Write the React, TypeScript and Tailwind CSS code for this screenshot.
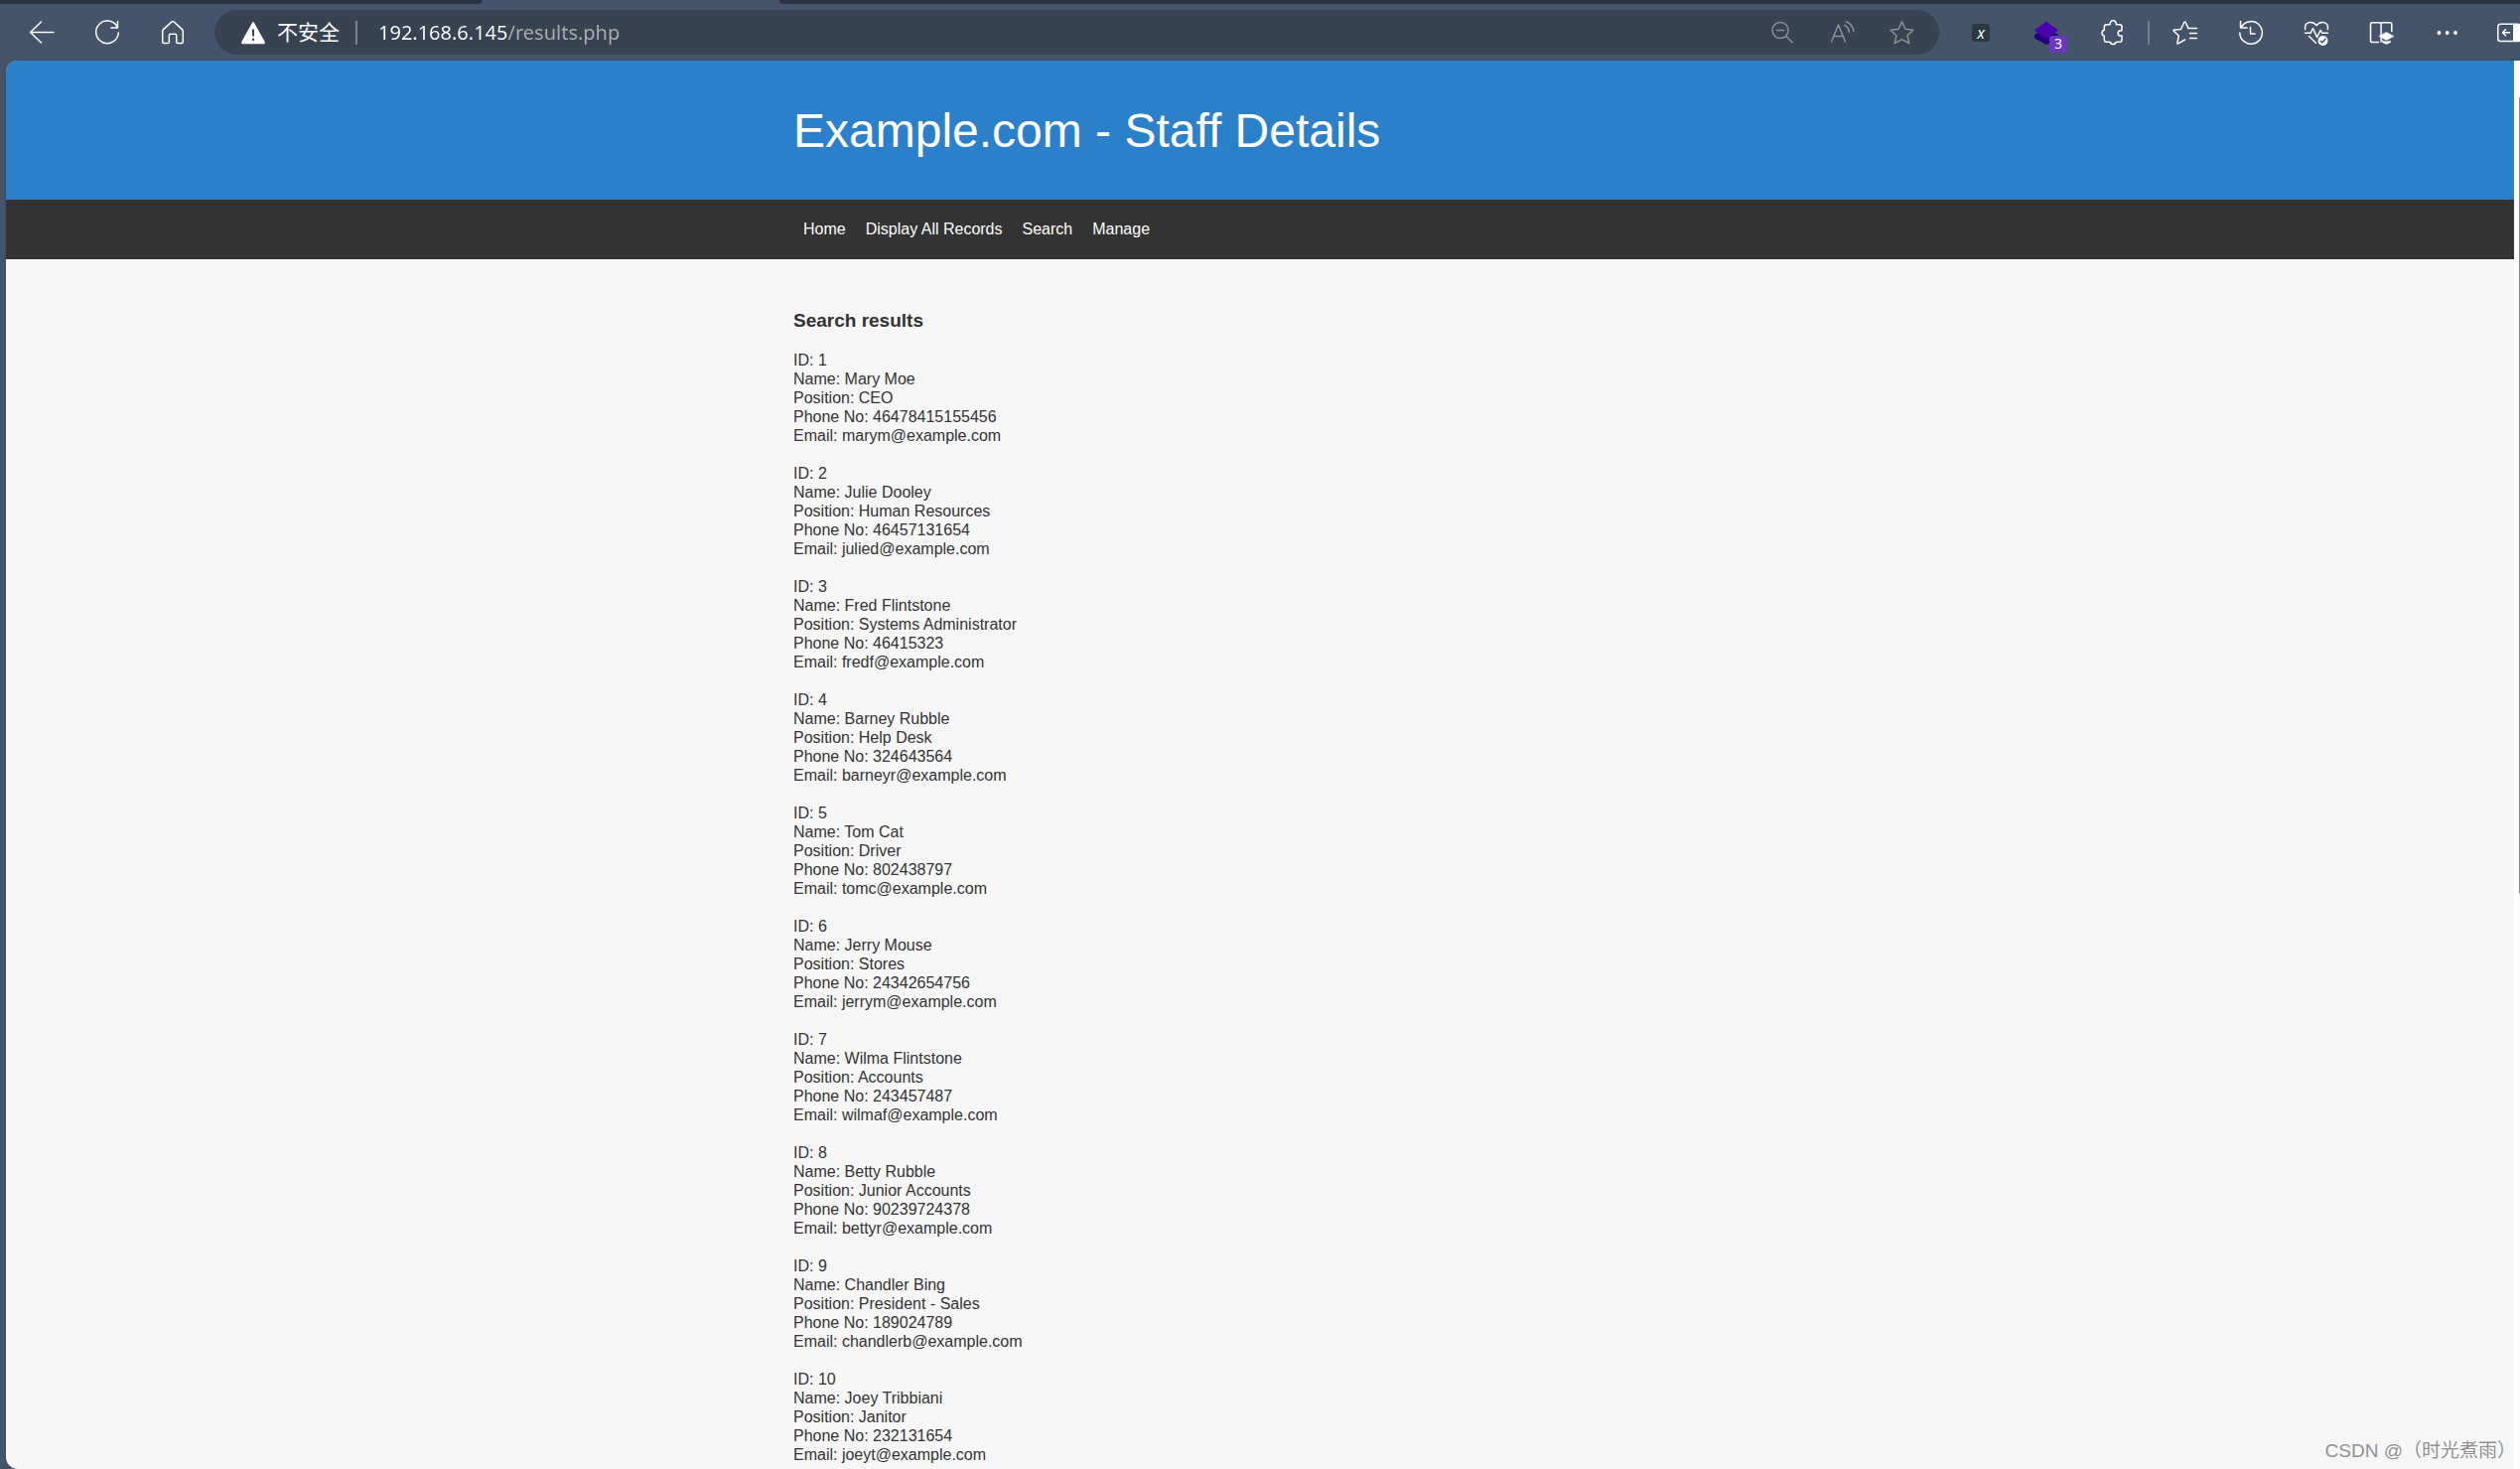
import React from 'react';

type Staff = {
  id: number;
  name: string;
  position: string;
  phone: string;
  email: string;
};

const staff: Staff[] = [
  { id: 1, name: 'Mary Moe', position: 'CEO', phone: '46478415155456', email: 'marym@example.com' },
  { id: 2, name: 'Julie Dooley', position: 'Human Resources', phone: '46457131654', email: 'julied@example.com' },
  { id: 3, name: 'Fred Flintstone', position: 'Systems Administrator', phone: '46415323', email: 'fredf@example.com' },
  { id: 4, name: 'Barney Rubble', position: 'Help Desk', phone: '324643564', email: 'barneyr@example.com' },
  { id: 5, name: 'Tom Cat', position: 'Driver', phone: '802438797', email: 'tomc@example.com' },
  { id: 6, name: 'Jerry Mouse', position: 'Stores', phone: '24342654756', email: 'jerrym@example.com' },
  { id: 7, name: 'Wilma Flintstone', position: 'Accounts', phone: '243457487', email: 'wilmaf@example.com' },
  { id: 8, name: 'Betty Rubble', position: 'Junior Accounts', phone: '90239724378', email: 'bettyr@example.com' },
  { id: 9, name: 'Chandler Bing', position: 'President - Sales', phone: '189024789', email: 'chandlerb@example.com' },
  { id: 10, name: 'Joey Tribbiani', position: 'Janitor', phone: '232131654', email: 'joeyt@example.com' },
];

const navLinks = ['Home', 'Display All Records', 'Search', 'Manage'];

function Icon({ children }: { children: React.ReactNode }) {
  return (
    <svg
      className="h-7 w-7 shrink-0"
      viewBox="0 0 28 28"
      fill="none"
      stroke="currentColor"
      strokeWidth="1.5"
      strokeLinecap="round"
      strokeLinejoin="round"
      aria-hidden="true"
    >
      {children}
    </svg>
  );
}

function ToolButton({ label, children }: { label: string; children: React.ReactNode }) {
  return (
    <button type="button" aria-label={label} className="flex h-11 w-[66px] shrink-0 items-center justify-center">
      {children}
    </button>
  );
}

function FieldButton({ label, children }: { label: string; children: React.ReactNode }) {
  return (
    <button type="button" aria-label={label} className="flex h-11 w-[60px] shrink-0 items-center justify-center text-[#8f9091]">
      {children}
    </button>
  );
}

function AddressBar() {
  return (
    <div className="mx-[9px] flex h-[45px] min-w-0 flex-1 items-center rounded-full bg-[#374353] pr-2 pl-[25px]">
      <button type="button" className="flex items-center gap-[10px] text-[21px] leading-7 text-white">
        <Icon>
          <path d="M14 3.7 25 23.4q.4 1.1-.8 1.1H3.8q-1.2 0-.8-1.1Z" fill="currentColor" />
          <path d="M14 10.5v7" stroke="#374353" strokeWidth="2" strokeLinecap="butt" />
          <circle cx="14" cy="20.7" r="1.2" fill="#374353" stroke="none" />
        </Icon>
        不安全
      </button>
      <div className="mr-[21px] ml-4 h-6 w-[2px] shrink-0 bg-[#7b838d]" />
      <input
        aria-label="Address"
        defaultValue="192.168.6.145/results.php"
        className="h-8 min-w-0 flex-1 bg-[linear-gradient(to_right,#ffffff_131px,#adadad_131px)] bg-clip-text font-['Noto_Sans',sans-serif] text-xl text-transparent outline-none"
      />
      <FieldButton label="Zoom out">
        <Icon>
          <circle cx="12" cy="11.5" r="8" />
          <path d="M8.3 11.5h7.4M17.8 17.3l6.4 6.4" />
        </Icon>
      </FieldButton>
      <FieldButton label="Read aloud">
        <Icon>
          <path d="M3.500 23 10.500 6l7 17M6 17.500h9M16.500 6.300q4.500 2 4.800 7M18.500 2.800q7 3.200 7.300 10" />
        </Icon>
      </FieldButton>
      <FieldButton label="Add to favorites">
        <Icon>
          <path d="m14.500 2.900 3.400 7.400 8.100.9-6 5.500 1.800 8-7.300-4.100-7.300 4.100 1.800-8-6-5.500 8.100-.9Z" />
        </Icon>
      </FieldButton>
    </div>
  );
}

function Toolbar() {
  return (
    <div className="flex h-[57px] shrink-0 items-center overflow-hidden pl-[9px] text-white">
      <ToolButton label="Back">
        <Icon>
          <path d="M26 13.5H2.5M13.5 3 2.5 13.5l11 10.5" />
        </Icon>
      </ToolButton>
      <ToolButton label="Refresh">
        <Icon>
          <path d="M24 8A11.3 11.3 0 1 0 25.3 14M24.5 2.5V9h-6.7" />
        </Icon>
      </ToolButton>
      <ToolButton label="Home">
        <Icon>
          <path d="M3.7 12.3q0-1 .8-1.7L13 2.9q1-.8 2 0l8.5 7.700q.8.7.8 1.700V23q0 1.500-1.500 1.500H19q-1.300 0-1.300-1.300v-6.400q0-1.600-1.600-1.600h-4.200q-1.600 0-1.600 1.600v6.400q0 1.300-1.300 1.300H5.200Q3.700 24.500 3.700 23Z" />
        </Icon>
      </ToolButton>

      <AddressBar />

      <ToolButton label="XPath extension">
        <span className="flex h-[18px] w-[18px] items-center justify-center rounded-[3px] bg-[#2b3a40] font-['Open_Sans',sans-serif] text-base leading-4 italic">
          x
        </span>
      </ToolButton>
      <ToolButton label="Layers extension">
        <span className="relative flex">
          <svg className="h-7 w-7" viewBox="0 0 28 28" aria-hidden="true">
            <path d="M2 16v3.500L14 26l12-6.500V16L14 9Z" fill="#22007c" />
            <path d="m14 2.500 12 9-12 8.800-12-8.800Z" fill="#4b00b0" />
          </svg>
          <span className="absolute top-[17px] left-[17px] h-[17px] w-[18px] rounded-[3px] bg-[#6b37bf] text-center font-['Noto_Sans',sans-serif] text-sm leading-4">
            3
          </span>
        </span>
      </ToolButton>
      <ToolButton label="Extensions">
        <Icon>
          <path d="M8.500 5.700h3.700a3.100 3.100 0 1 1 6 0h3.500q2.300 0 2.300 2.300v3.700h-1.200a2.700 2.700 0 0 0 0 5.400H24V21q0 2.300-2.300 2.300h-3.500a3.100 3.100 0 0 1-6 0H8.500q-2.200 0-2.200-2.300v-3.700a3.100 3.100 0 0 1 0-6V8q0-2.300 2.200-2.300Z" />
        </Icon>
      </ToolButton>
      <div className="mx-[3px] h-6 w-[2px] shrink-0 bg-[#76808e]" />
      <ToolButton label="Favorites">
        <Icon>
          <path d="M17.500 9.500h8M18.500 14.500h7M18.500 19.500h7M13.500 21l-6.800 3.900q-1 .3-.8-.8L7.300 17l-5-4.700q-.7-1 .6-1.300l6.600-.5 3.200-7q.8-1 1.500 0l2.800 6.100" />
        </Icon>
      </ToolButton>
      <ToolButton label="History">
        <Icon>
          <path d="M3.500 2.500v6.500H10M4.300 8.300A11.300 11.300 0 1 1 2.800 14M13.500 8.500v6.500h4.500" />
        </Icon>
      </ToolButton>
      <ToolButton label="Browser essentials">
        <Icon>
          <path d="M2.600 10.500C1.500 2.500 10 1.500 14 6.500c4-5 12.500-4 11.400 4M2.500 14.200h5.700l2.300-4.700 4 9 3.500-7 1.800 2.700h5.700M6.500 17.500l7 6.700" />
          <circle cx="20.500" cy="22" r="5" fill="currentColor" stroke="none" />
          <path d="m18.200 22.200 1.600 1.600 3.200-3.600" stroke="#44546a" />
        </Icon>
      </ToolButton>
      <ToolButton label="Immersive reader">
        <Icon>
          <path d="M10.500 23.500H4.300q-1.800 0-1.800-1.800V5.500q0-1.800 1.800-1.800h7q1.200 0 1.800 1 .6-1 1.800-1H22q1.800 0 1.800 1.800v7M13.100 4.500V23" />
          <path d="m18.500 13.500 7.500 4-7.500 4-7.500-4ZM14.500 22v1.500q4 3.500 8 0V22q-4 1.800-8 0Z" fill="currentColor" strokeWidth="0.500" />
        </Icon>
      </ToolButton>
      <ToolButton label="Settings and more">
        <Icon>
          <g fill="currentColor" stroke="none">
            <circle cx="5.500" cy="14" r="1.900" />
            <circle cx="13.700" cy="14" r="1.900" />
            <circle cx="22" cy="14" r="1.900" />
          </g>
        </Icon>
      </ToolButton>
      <button type="button" aria-label="Sidebar" className="flex h-11 w-10 shrink-0 items-center overflow-hidden pl-[15px]">
        <Icon>
          <rect x="2.800" y="5.200" width="22.500" height="17.300" rx="2.500" />
          <path d="M18 5.200h9v17.300h-9z" fill="currentColor" stroke="none" />
          <path d="M14.500 13.800H7.500M10.500 10.800l-3 3 3 3" />
        </Icon>
      </button>
    </div>
  );
}

function StaffRecord({ person }: { person: Staff }) {
  return (
    <p className="mb-[19px] leading-[19px]">
      ID: {person.id}
      <br />
      Name: {person.name}
      <br />
      Position: {person.position}
      <br />
      Phone No: {person.phone}
      <br />
      Email: {person.email}
    </p>
  );
}

export default function App() {
  return (
    <div className="relative flex h-screen flex-col overflow-hidden bg-[#44546a] font-['Liberation_Sans','Noto_Sans_CJK_SC',sans-serif]">
      {/* tab strip, only its lower edge is visible */}
      <div className="flex h-1 shrink-0">
        <div className="w-[486px] rounded-br bg-[#2a3441]" />
        <div className="w-[299px]" />
        <div className="flex-1 rounded-bl bg-[#2a3441]" />
      </div>

      <Toolbar />

      <div className="ml-[6px] flex min-h-0 flex-1 overflow-hidden rounded-l-xl shadow-[0_0_2px_rgba(0,0,0,0.3)]">
        <div className="min-w-0 flex-1 overflow-hidden bg-[#f6f6f6] text-base text-[#333333]">
          <header className="flex h-[140px] items-center bg-[#2c80c9] pt-[2px]">
            <h1 className="mx-auto w-full max-w-[940px] text-5xl text-white">Example.com - Staff Details</h1>
          </header>
          <nav className="bg-[#333333]">
            <ul className="mx-auto flex h-[60px] max-w-[940px] items-center">
              {navLinks.map((link) => (
                <li key={link}>
                  <a href="#" className="px-[10px] leading-[19px] text-white">
                    {link}
                  </a>
                </li>
              ))}
            </ul>
          </nav>
          <main className="mx-auto max-w-[940px] pt-[51px]">
            <h3 className="mb-[19px] text-[19px] leading-[22px] font-bold">Search results</h3>
            {staff.map((person) => (
              <StaffRecord key={person.id} person={person} />
            ))}
          </main>
        </div>

        {/* scrollbar */}
        <div className="flex w-[6px] shrink-0 flex-col items-end bg-[#fcfcfc] pt-[37px]">
          <div className="h-[58%] w-px bg-[#858585]" />
        </div>
      </div>

      <div className="absolute right-1 bottom-1 text-[19px] leading-7 text-[#8f8f8f] [text-shadow:-1px_-1px_0_#ffffff]">
        CSDN @（时光煮雨）
      </div>
    </div>
  );
}
